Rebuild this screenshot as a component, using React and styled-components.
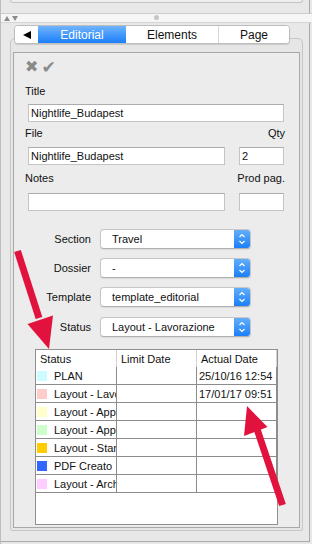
import React from 'react';
import styled, { createGlobalStyle } from 'styled-components';

const GlobalStyle = createGlobalStyle`
  html, body {
    margin: 0;
    padding: 0;
    background: #e8e8e8;
  }
  body {
    font-family: "Liberation Sans", Arial, sans-serif;
    font-size: 11px;
    color: #111;
  }
`;

const Window = styled.div`
  position: relative;
  width: 312px;
  height: 544px;
  box-sizing: border-box;
  background: #e8e8e8;
  border-left: 1px solid #bdbdbd;
  display: flex;
  flex-direction: column;
  overflow: hidden;
`;

const TopArea = styled.div`
  height: 13px;
  flex: none;
  margin-right: 2px;
  border-right: 1px solid #a9a9a9;
`;

const TopBox = styled.div`
  margin-left: 9px;
  width: 293px;
  height: 3px;
  box-sizing: border-box;
  background: #eeeeee;
  border: 1px solid #c4c4c4;
  border-top: none;
  border-radius: 0 0 4px 4px;
`;

const Splitter = styled.div`
  flex: none;
  height: 10px;
  margin-left: -1px;
  box-sizing: border-box;
  background: #f6f6f6;
  border-top: 1px solid #cdcdcd;
  border-bottom: 1px solid #d6d6d6;
  display: flex;
  align-items: center;
  position: relative;
  padding-left: 4px;
  gap: 2px;
`;

const Tri = styled.span`
  width: 0;
  height: 0;
  border-left: 3px solid transparent;
  border-right: 3px solid transparent;
  ${({ $down }) => ($down ? 'border-top: 5px solid #8c8c8c;' : 'border-bottom: 5px solid #8c8c8c;')}
`;

const Knob = styled.span`
  position: absolute;
  left: 154px;
  top: 1px;
  width: 5px;
  height: 5px;
  border-radius: 50%;
  background: #c6c6c6;
`;

const Body = styled.div`
  flex: none;
  height: 519px;
  box-sizing: border-box;
  margin-right: 2px;
  border-right: 1px solid #a9a9a9;
  border-bottom: 1px solid #a9a9a9;
  padding-top: 2px;
  display: flex;
  flex-direction: column;
`;

const Tabs = styled.div`
  position: relative;
  z-index: 1;
  margin-left: 13px;
  margin-bottom: -6px;
  width: 276px;
  height: 19px;
  box-sizing: border-box;
  display: flex;
  background: #fff;
  border: 1px solid #bdbdbd;
  border-radius: 4px;
  box-shadow: 0 1px 1px rgba(0, 0, 0, 0.12);
  overflow: hidden;
`;

const Tab = styled.div`
  width: ${({ $w }) => $w}px;
  flex: none;
  box-sizing: border-box;
  display: flex;
  align-items: center;
  justify-content: center;
  font-size: 12px;
  color: ${({ $active }) => ($active ? '#fff' : '#111')};
  background: ${({ $active }) => ($active ? 'linear-gradient(#6fb3fc, #1b7ffa)' : '#fff')};
  border-right: ${({ $sep }) => ($sep ? '1px solid #d8d8d8' : 'none')};
`;

const BackArrow = styled.span`
  width: 0;
  height: 0;
  margin-left: 1px;
  border-top: 4px solid transparent;
  border-bottom: 4px solid transparent;
  border-right: 8px solid #000;
`;

const Panel = styled.div`
  flex: none;
  margin-left: 9px;
  width: 293px;
  height: 493px;
  box-sizing: border-box;
  background: #e6e6e6;
  border: 1px solid #c6c6c6;
  border-radius: 5px 5px 2px 2px;
  padding: 13px 2px 2px 2px;
`;

const Inner = styled.div`
  height: 476px;
  box-sizing: border-box;
  background: #ececec;
  border: 1px solid #a8a8a8;
  display: flex;
  flex-direction: column;
`;

const Icons = styled.div`
  margin: 7px 0 0 11px;
  height: 14px;
  display: flex;
  align-items: center;
  gap: 3px;
  font-family: "DejaVu Sans", sans-serif;
  color: #8a8a8a;
  line-height: 14px;
`;

const Glyph = styled.span`
  font-size: ${({ $size }) => $size}px;
`;

const LabelRow = styled.div`
  margin: ${({ $mt }) => $mt}px 14px 0 11px;
  height: 14px;
  line-height: 14px;
  display: flex;
  justify-content: space-between;
`;

const InputRow = styled.div`
  margin: ${({ $mt }) => $mt}px 0 0 14px;
  display: flex;
  gap: 14px;
`;

const TextBox = styled.input`
  width: ${({ $w }) => $w}px;
  height: 18px;
  box-sizing: border-box;
  padding: 0 2px;
  margin: 0;
  border: 1px solid #c4c4c4;
  border-top-color: #acacac;
  background: #fff;
  font-family: "Liberation Sans", Arial, sans-serif;
  font-size: 11px;
  color: #111;
  outline: none;
`;

const SelectRow = styled.div`
  margin-top: ${({ $mt }) => $mt}px;
  display: flex;
  align-items: center;
  height: 20px;
`;

const SelectLabel = styled.div`
  width: 77px;
  text-align: right;
  margin-right: 9px;
`;

const Select = styled.div`
  width: 151px;
  height: 20px;
  box-sizing: border-box;
  display: flex;
  background: #fff;
  border: 1px solid #c6c6c6;
  border-bottom-color: #b0b0b0;
  border-radius: 4px;
  box-shadow: 0 1px 1px rgba(0, 0, 0, 0.08);
  overflow: hidden;
`;

const SelectText = styled.div`
  flex: 1;
  padding-left: 11px;
  line-height: 18px;
  white-space: nowrap;
`;

const Stepper = styled.div`
  width: 16px;
  flex: none;
  background: linear-gradient(#62aefb, #1c7ff8);
  display: flex;
  align-items: center;
  justify-content: center;
`;

const Table = styled.div`
  margin: 12px 0 0 21px;
  width: 243px;
  height: 176px;
  box-sizing: border-box;
  border: 1px solid #8f8f8f;
  background: #fff;
`;

const Row = styled.div`
  display: flex;
  height: ${({ $head }) => ($head ? 17 : 18)}px;
  box-sizing: border-box;
  border-bottom: ${({ $head }) => ($head ? 'none' : '1px solid #8c8c8c')};
`;

const Cell = styled.div`
  width: ${({ $w }) => $w}px;
  flex: none;
  box-sizing: border-box;
  border-right: 1px solid ${({ $head }) => ($head ? '#d2d2d2' : '#8c8c8c')};
  padding-left: ${({ $pl }) => $pl}px;
  display: flex;
  align-items: center;
  white-space: nowrap;
  overflow: hidden;
`;

const Swatch = styled.span`
  width: 10px;
  height: 10px;
  flex: none;
  margin-right: 7px;
  background: ${({ $color }) => $color};
`;

const Overlay = styled.svg`
  position: absolute;
  left: 0;
  top: 0;
  pointer-events: none;
`;

const statuses = [
  { name: 'PLAN', color: '#ccfcff', actual: '25/10/16 12:54' },
  { name: 'Layout - Lavorazione', color: '#ffcccc', actual: '17/01/17 09:51' },
  { name: 'Layout - Approvato', color: '#ffffcc', actual: '' },
  { name: 'Layout - Approvato Finale', color: '#ccffcc', actual: '' },
  { name: 'Layout - Stampa', color: '#ffcc00', actual: '' },
  { name: 'PDF Creato', color: '#3366ff', actual: '' },
  { name: 'Layout - Archiviato', color: '#ffccff', actual: '' },
];

const selects = [
  { label: 'Section', value: 'Travel', mt: 18 },
  { label: 'Dossier', value: '-', mt: 9 },
  { label: 'Template', value: 'template_editorial', mt: 9 },
  { label: 'Status', value: 'Layout - Lavorazione', mt: 10 },
];

function Chevrons() {
  return (
    <svg width="8" height="14" viewBox="0 0 8 14">
      <path d="M1.5 5 L4 2.5 L6.5 5" fill="none" stroke="#fff" strokeWidth="1.2" />
      <path d="M1.5 9 L4 11.5 L6.5 9" fill="none" stroke="#fff" strokeWidth="1.2" />
    </svg>
  );
}

export default function App() {
  return (
    <>
      <GlobalStyle />
      <Window>
        <TopArea>
          <TopBox />
        </TopArea>
        <Splitter>
          <Tri />
          <Tri $down />
          <Knob />
        </Splitter>
        <Body>
          <Tabs>
            <Tab $w={23}>
              <BackArrow />
            </Tab>
            <Tab $w={88} $active>Editorial</Tab>
            <Tab $w={93} $sep>Elements</Tab>
            <Tab $w={70}>Page</Tab>
          </Tabs>
          <Panel>
            <Inner>
              <Icons>
                <Glyph $size={16}>✖</Glyph>
                <Glyph $size={17}>✔</Glyph>
              </Icons>

              <LabelRow $mt={10}>
                <span>Title</span>
              </LabelRow>
              <InputRow $mt={6}>
                <TextBox $w={256} readOnly value="Nightlife_Budapest" />
              </InputRow>

              <LabelRow $mt={4}>
                <span>File</span>
                <span>Qty</span>
              </LabelRow>
              <InputRow $mt={7}>
                <TextBox $w={197} readOnly value="Nightlife_Budapest" />
                <TextBox $w={45} readOnly value="2" />
              </InputRow>

              <LabelRow $mt={6}>
                <span>Notes</span>
                <span>Prod pag.</span>
              </LabelRow>
              <InputRow $mt={8}>
                <TextBox $w={197} readOnly value="" />
                <TextBox $w={45} readOnly value="" />
              </InputRow>

              {selects.map((s) => (
                <SelectRow key={s.label} $mt={s.mt}>
                  <SelectLabel>{s.label}</SelectLabel>
                  <Select>
                    <SelectText>{s.value}</SelectText>
                    <Stepper>
                      <Chevrons />
                    </Stepper>
                  </Select>
                </SelectRow>
              ))}

              <Table>
                <Row $head>
                  <Cell $w={81} $pl={4} $head>Status</Cell>
                  <Cell $w={80} $pl={4} $head>Limit Date</Cell>
                  <Cell $w={80} $pl={4} $head>Actual Date</Cell>
                </Row>
                {statuses.map((s) => (
                  <Row key={s.name}>
                    <Cell $w={81} $pl={1}>
                      <Swatch $color={s.color} />
                      {s.name}
                    </Cell>
                    <Cell $w={80} $pl={2} />
                    <Cell $w={80} $pl={2}>{s.actual}</Cell>
                  </Row>
                ))}
              </Table>
            </Inner>
          </Panel>
        </Body>
        <Overlay width="312" height="544" viewBox="0 0 312 544">
          <line x1="16.5" y1="251" x2="38" y2="318" stroke="#e1133e" strokeWidth="7" />
          <polygon points="48,349 52,315.5 26.5,324" fill="#e1133e" />
          <line x1="281.5" y1="505" x2="256" y2="429" stroke="#e1133e" strokeWidth="7" />
          <polygon points="246,406 266.5,427 243,436" fill="#e1133e" />
        </Overlay>
      </Window>
    </>
  );
}
